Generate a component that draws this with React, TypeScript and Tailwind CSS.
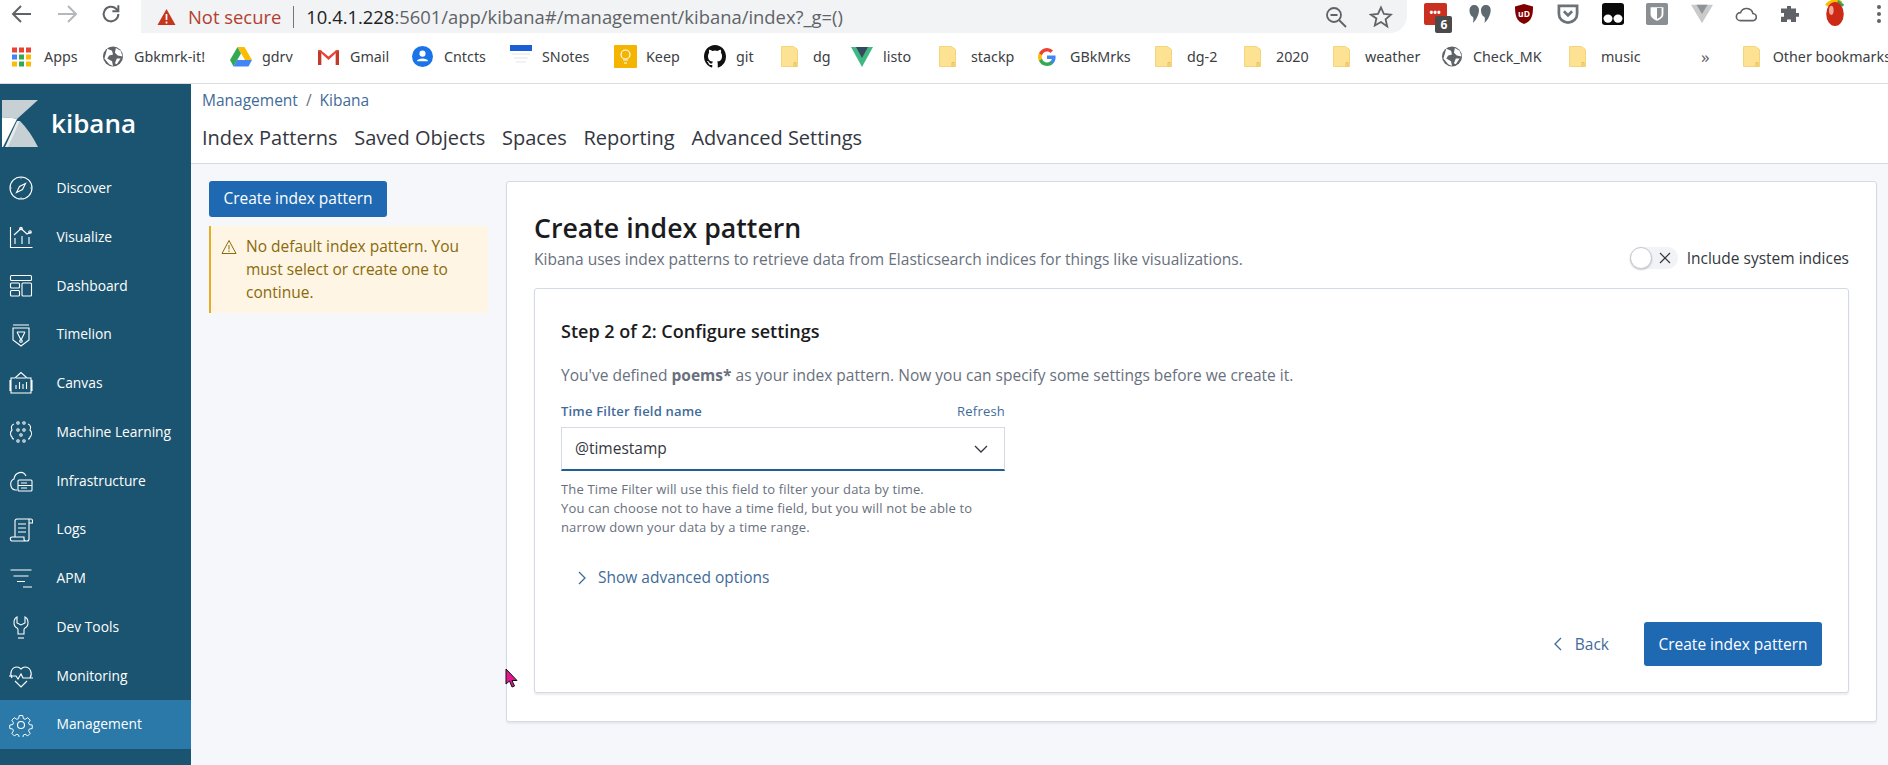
import React from "react";

const S = ({ children, size = 24, vb = "0 0 24 24", className = "", sw = 1.1 }: any) => (
  <svg width={size} height={size} viewBox={vb} fill="none" stroke="currentColor" strokeWidth={sw} className={className}>
    {children}
  </svg>
);

const navIcons: Record<string, React.ReactNode> = {
  Discover: <S><circle cx="12" cy="12" r="11" /><path d="M16.500 7.500l-3 6-6 3 3-6z" /><path d="M12 1v2M12 21v2M1 12h2M21 12h2" strokeWidth=".6" /></S>,
  Visualize: <S><path d="M1.500 2v20.500h22" /><path d="M5 10l7-6.500 6 5.500 4-2" /><circle cx="12" cy="3.500" r="1.300" /><circle cx="21" cy="7" r="1.300" /><path d="M6 13v6M13 11v8M20 12v7" /></S>,
  Dashboard: <S><rect x="1.500" y="1.500" width="21" height="5" rx="1" /><rect x="1.500" y="9" width="9" height="5" rx="1" /><rect x="1.500" y="16.500" width="9" height="5.500" rx="1" /><rect x="13" y="9" width="9.500" height="13" rx="1" /></S>,
  Timelion: <S><path d="M4 2h16M4 5h16v12l-8 6-8-6z" /><path d="M8 9h8M8 9l4 8 4-8" /><circle cx="12" cy="18" r="1.300" /></S>,
  Canvas: <S><path d="M12 1.500L6 7H2v15h20V7h-4zM1 9v11M23 9v11" /><path d="M7 18v-4M10.500 18v-7M14 18v-5M17.500 18v-7M7 7h10" /></S>,
  "Machine Learning": <S><circle cx="9" cy="3" r="1.200" /><circle cx="15" cy="3" r="1.200" /><circle cx="9" cy="10" r="1.200" /><circle cx="15" cy="10" r="1.200" /><circle cx="12" cy="15" r="1.200" /><circle cx="9" cy="21" r="1.200" /><circle cx="15" cy="21" r="1.200" /><path d="M5 4C2 5 2 8 3 10c-2 2-2 5 0 7 0 1 1 2 2 2M19 4c3 1 3 4 2 6 2 2 2 5 0 7 0 1-1 2-2 2" /></S>,
  Infrastructure: <S><path d="M8 21H6C1 20 0 12 5 10 6 3 14 1 17 7" /><rect x="9" y="11" width="14" height="11" rx="1" /><path d="M9 16.500h14M12 14h6M12 19h6" /></S>,
  Logs: <S><path d="M6 19V3a2 2 0 012-2h14c1 0 1.500 1 1.500 2v2H20M20 1v20a2 2 0 01-2 2H3c-2 0-2.500-4 0-4h12v2a2 2 0 002 2" /><path d="M9 6h8M9 10h8M9 14h8" /></S>,
  APM: <S><path d="M1.500 4h21M4.500 10h15M8 15.500h8M14 21h9" /></S>,
  "Dev Tools": <S><path d="M8 2C4 4 4 11 8 13c1 .6 1 1 1 2v4h6v-4c0-1 0-1.400 1-2 4-2 4-9 0-11v6l-4 2-4-2z" /><path d="M9 23h6" /></S>,
  Monitoring: <S><path d="M3 14C0 9 3 3 8 3c2 0 3 1 4 2 1-1 2-2 4-2 5 0 8 6 5 11" /><path d="M0 12h7l2 3 3-5 2 4h10" /><path d="M6 17l6 6 6-6" /></S>,
  Management: <S><circle cx="12" cy="12" r="3.500" /><path d="M10 1.500h4l.6 3.300 2 .9 2.900-1.800 2.700 2.800-1.800 2.800.8 2 3.300.6v3.800l-3.300.6-.8 2 1.800 2.800-2.700 2.800-2.900-1.800-2 .9-.6 3.300h-4l-.6-3.300-2-.9-2.900 1.800-2.700-2.800 1.800-2.800-.8-2-3.300-.6v-3.800l3.300-.6.800-2-1.800-2.800 2.700-2.800 2.900 1.800 2-.9z" transform="translate(1.200 1.200) scale(.9)" /></S>,
};

const navItems = Object.keys(navIcons);

const Folder = () => (
  <svg width="17" height="21" viewBox="0 0 17 21">
    <path d="M.5.500h12l4 3v17H.5z" fill="#fde293" stroke="#f5d47a" strokeWidth="1" />
    <path d="M13 20.500v-4h2v4" fill="none" stroke="#e8bf55" strokeWidth="1" />
  </svg>
);
const Globe = () => (
  <svg width="22" height="21" viewBox="0 0 22 22">
    <circle cx="11" cy="11" r="10.500" fill="#5f6368" />
    <path d="M5 3l5 2 1 4-4 1-2 3 5 3 1 5-4-2-5-6zM14 2l5 3 2 6-5-1-3-3zM15 13l4 0-4 6-2-1z" fill="#fff" />
  </svg>
);

const bookmarks: { icon: React.ReactNode; label: string; w: string }[] = [
  { w: "w-[90px]", icon: <svg width="19" height="20" viewBox="0 0 19 19">{[["#ea4335","#ea4335","#ea4335"],["#4285f4","#34a853","#fbbc04"],["#fbbc04","#34a853","#fbbc04"]].map((r,y)=>r.map((c,x)=><rect key={`${x}${y}`} x={x*7} y={y*7} width="5" height="5" fill={c}/>))}</svg>, label: "Apps" },
  { w: "w-[128px]", icon: <Globe />, label: "Gbkmrk-it!" },
  { w: "w-[88px]", icon: <svg width="22" height="20" viewBox="0 0 22 20"><path d="M7.500 0h7l7.500 13h-7z" fill="#fbbc04"/><path d="M7.500 0L0 13l3.500 6.500L11 6.500z" fill="#34a853"/><path d="M3.500 19.500h15L22 13H7z" fill="#4285f4"/></svg>, label: "gdrv" },
  { w: "w-[94px]", icon: <svg width="21" height="16" viewBox="0 0 22 19" preserveAspectRatio="none"><path d="M0 1.500h3.500V19H0zM18.500 1.500H22V19h-3.500z" fill="#c5392a"/><path d="M0 1.500h3L11 9l8-7.500h3L11 13z" fill="#ea4335"/></svg>, label: "Gmail" },
  { w: "w-[98px]", icon: <svg width="21" height="21" viewBox="0 0 22 22"><circle cx="11" cy="11" r="11" fill="#1a73e8"/><circle cx="11" cy="8" r="3.200" fill="#fff"/><path d="M5 16c1-4 11-4 12 0z" fill="#fff"/></svg>, label: "Cntcts" },
  { w: "w-[104px]", icon: <svg width="22" height="20" viewBox="0 0 22 20" className="-mt-[4px]"><rect width="22" height="6" fill="#1a5fd6"/><path d="M2 9h18M4 13h14M6 17h10" stroke="#eee" strokeWidth="1.500"/></svg>, label: "SNotes" },
  { w: "w-[90px]", icon: <svg width="23" height="23" viewBox="0 0 23 23"><rect width="23" height="23" rx="1" fill="#f4b400"/><circle cx="11.500" cy="9.500" r="4.500" fill="none" stroke="#fff" strokeWidth="1.200"/><path d="M9 15h5M10 18h3" stroke="#fff" strokeWidth="1.200"/></svg>, label: "Keep" },
  { w: "w-[77px]", icon: <svg width="22" height="23" viewBox="0 0 16 16" preserveAspectRatio="none"><path fill="#111" d="M8 0C3.580 0 0 3.580 0 8c0 3.540 2.290 6.530 5.470 7.590.4.070.55-.17.550-.38v-1.340c-2.230.48-2.700-1.070-2.700-1.070-.36-.93-.89-1.170-.89-1.170-.73-.5.050-.49.050-.49.800.06 1.230.82 1.230.82.710 1.230 1.870.87 2.330.66.070-.52.280-.87.510-1.070-1.780-.2-3.640-.89-3.640-3.950 0-.87.310-1.590.820-2.150-.08-.2-.36-1.020.080-2.120 0 0 .67-.21 2.200.82a7.600 7.600 0 014 0c1.530-1.040 2.200-.82 2.200-.82.440 1.100.16 1.920.08 2.120.51.560.82 1.270.82 2.150 0 3.070-1.870 3.750-3.650 3.950.29.250.54.730.54 1.480v2.200c0 .21.150.46.550.38A8.010 8.010 0 0016 8c0-4.420-3.580-8-8-8z"/></svg>, label: "git" },
  { w: "w-[70px]", icon: <Folder />, label: "dg" },
  { w: "w-[88px]", icon: <svg width="22" height="20" viewBox="0 0 22 20"><path d="M0 0h22L11 20z" fill="#41b883"/><path d="M5 0h12l-6 11z" fill="#35495e"/></svg>, label: "listo" },
  { w: "w-[99px]", icon: <Folder />, label: "stackp" },
  { w: "w-[117px]", icon: <svg width="18" height="18" viewBox="0 0 18 18"><path d="M17.600 9.200c0-.6-.1-1.200-.2-1.800H9v3.500h4.800a4 4 0 01-1.800 2.700v2.200h2.900c1.700-1.600 2.700-3.900 2.700-6.600z" fill="#4285f4"/><path d="M9 18c2.400 0 4.500-.8 5.900-2.200L12 13.600c-.8.500-1.800.9-3 .9-2.300 0-4.300-1.600-5-3.700H1v2.300A9 9 0 009 18z" fill="#34a853"/><path d="M4 10.700a5.400 5.400 0 010-3.400V5H1a9 9 0 000 8z" fill="#fbbc05"/><path d="M9 3.600c1.300 0 2.500.5 3.400 1.300L15 2.400A9 9 0 001 5l3 2.300c.7-2.100 2.700-3.700 5-3.700z" fill="#ea4335"/></svg>, label: "GBkMrks" },
  { w: "w-[89px]", icon: <Folder />, label: "dg-2" },
  { w: "w-[89px]", icon: <Folder />, label: "2020" },
  { w: "w-[108px]", icon: <Folder />, label: "weather" },
  { w: "w-[128px]", icon: <Globe />, label: "Check_MK" },
  { w: "w-[132px]", icon: <Folder />, label: "music" },
];

const Ext = ({ children }: any) => <div className="relative flex h-[28px] w-[44.400px] items-center justify-center">{children}</div>;

export default function App() {
  return (
    <div className="relative flex h-[765px] w-[1888px] flex-col overflow-hidden bg-white font-['Open_Sans','Noto_Sans',sans-serif] text-[#343741]">
      {/* Browser toolbar */}
      <div className="flex h-[34px] shrink-0 items-start">
        <div className="flex h-[28px] w-[141px] shrink-0 items-center pl-[11px] text-[#5f6368]">
          <svg width="22" height="20" viewBox="0 0 22 20" fill="none" stroke="currentColor" strokeWidth="2"><path d="M20 10H2M10 2l-8 8 8 8" /></svg>
          <svg width="22" height="20" viewBox="0 0 22 20" fill="none" stroke="#b4b7bb" strokeWidth="2" className="ml-[23px]"><path d="M2 10h18M12 2l8 8-8 8" /></svg>
          <svg width="22" height="22" viewBox="0 0 24 24" fill="none" stroke="currentColor" strokeWidth="2.200" className="ml-[22px]"><path d="M20 12a8 8 0 11-2.400-5.700L20 9" /><path d="M20 2.500V9h-6.500" /></svg>
        </div>
        <div className="flex h-[33px] w-[1266px] shrink-0 items-center rounded-br-[17px] bg-[#f1f3f4] pl-[16px] pr-[14px] text-[18.400px]">
          <svg width="19" height="18" viewBox="0 0 19 18"><path d="M9.500 1L18.500 17H.5z" fill="#c5361d" /><path d="M9.500 6v6M9.500 13.500v2" stroke="#fff" strokeWidth="1.700" /></svg>
          <span className="ml-[12px] text-[#b3402f]">Not secure</span>
          <span className="mx-[12px] h-[22px] w-px bg-[#70757a]" />
          <span className="text-[#202124]">10.4.1.228</span>
          <span className="text-[#5f6368]">:5601/app/kibana#/management/kibana/index?_g=()</span>
          <svg width="24" height="24" viewBox="0 0 24 24" fill="none" stroke="#5f6368" strokeWidth="1.800" className="ml-auto mr-[21px]"><circle cx="10" cy="10" r="7" /><path d="M6.500 10h7M15 15l7 7" /></svg>
          <svg width="24" height="24" viewBox="0 0 24 24" fill="none" stroke="#5f6368" strokeWidth="1.800"><path d="M12 2.500l2.900 6.500 7 .7-5.300 4.700 1.600 7L12 17l-6.200 3.500 1.600-7L2 9.700 9 9z" /></svg>
        </div>
        <div className="ml-[6px] flex h-[28px] items-center">
          <Ext>
            <div className="flex h-[22px] w-[23px] items-center justify-center rounded-[2px] bg-[#c9301f] pb-[4px] text-[10px] font-bold leading-none text-white">•••</div>
            <span className="absolute bottom-[-5px] right-[5px] flex h-[17px] w-[17px] items-center justify-center rounded-[2px] bg-[#4a4a4a] text-[12px] font-bold text-white">6</span>
          </Ext>
          <Ext><svg width="22" height="20" viewBox="0 0 22 20" fill="#5f6a70"><path d="M5.500 1C8 1 10 3 10 6c0 5-3 10-6 13 .500-3 .500-5 0-6C1.500 12 .5 9 .5 6.500.5 3 2.500 1 5.500 1zM17 1c2.700 0 4.700 2 4.700 5 0 5-3 10-6.200 13 .500-3 .500-5 0-6C13 12 12 9 12 6.500 12 3 14 1 17 1z" /></svg></Ext>
          <Ext><svg width="20" height="20" viewBox="0 0 20 20"><path d="M10 0l9 2.500C19 11 18 17 10 20 2 17 1 11 1 2.500z" fill="#800000" /><text x="10" y="13" textAnchor="middle" fontSize="8.500" fill="#fff" fontWeight="700">uD</text></svg></Ext>
          <Ext><svg width="22" height="20" viewBox="0 0 24 22" fill="none" stroke="#6c7378" strokeWidth="3"><path d="M2 2h20v9a10 9.500 0 01-20 0z" /><path d="M7.500 8l4.500 4.500L16.500 8" /></svg></Ext>
          <Ext><svg width="22" height="22" viewBox="0 0 22 24" preserveAspectRatio="none"><rect width="22" height="24" rx="3" fill="#0a0a0a" /><circle cx="6" cy="17" r="4.500" fill="#fff" /><circle cx="16" cy="17" r="4.500" fill="#fff" /></svg></Ext>
          <Ext><svg width="22" height="22" viewBox="0 0 24 26" preserveAspectRatio="none"><rect width="24" height="26" rx="2" fill="#8a8f93" /><path d="M5 5h14v8c0 4-3 6-7 8-4-2-7-4-7-8z" fill="#fff" /><path d="M12 6h5v7c0 3-2 4.500-5 6z" fill="#8a8f93" /></svg></Ext>
          <Ext><svg width="22" height="20" viewBox="0 0 24 24" preserveAspectRatio="none"><path d="M0 1h24L12 23z" fill="#c8cacc" /><path d="M6 1h12l-6 11z" fill="#909396" /></svg></Ext>
          <Ext><svg width="22" height="16" viewBox="0 0 24 18" preserveAspectRatio="none" fill="none" stroke="#5f6368" strokeWidth="1.800"><path d="M6 16.500h13a4 4 0 00.500-8A7 7 0 006 7.500a4.500 4.500 0 000 9z" /></svg></Ext>
          <Ext><svg width="20" height="18" viewBox="0 0 20 20" preserveAspectRatio="none" fill="#5f6368"><path d="M7 1h4v3h5v5h3v4h-3v6H11v-3H7v3H1v-6h3v-4H1V4h6z" /></svg></Ext>
          <Ext><svg width="24" height="28" viewBox="0 0 26 30"><path d="M4 6c3-5 10-6 16-3" fill="none" stroke="#fbbc04" strokeWidth="4" /><path d="M16 1l6 5" stroke="#34a853" strokeWidth="3" /><ellipse cx="13" cy="15" rx="9.500" ry="13" fill="#cc2a16" /><ellipse cx="9" cy="11" rx="2.500" ry="5" fill="#f2a797" /></svg></Ext>
          <Ext><svg width="4" height="18" viewBox="0 0 4 18" fill="#5f6368"><circle cx="2" cy="2" r="2" /><circle cx="2" cy="9" r="2" /><circle cx="2" cy="16" r="2" /></svg></Ext>
        </div>
      </div>

      {/* Bookmarks bar */}
      <div className="flex h-[50px] shrink-0 items-center border-b border-[#dadce0] pb-[4px] pl-[12px] font-['Noto_Sans',sans-serif] text-[14.300px] text-[#3c4043]">
        {bookmarks.map((b) => (
          <div key={b.label} className={`flex shrink-0 items-center whitespace-nowrap ${b.w}`}>
            <span className="flex w-[32px] shrink-0 items-center">{b.icon}</span>
            <span>{b.label}</span>
          </div>
        ))}
        <span className="text-[17px] text-[#5f6368]">»</span>
        <span className="ml-[16px] h-[24px] w-px bg-[#c8cacc]" />
        <div className="ml-[17px] flex shrink-0 items-center whitespace-nowrap">
          <span className="flex w-[30px] shrink-0"><Folder /></span>
          <span>Other bookmarks</span>
        </div>
      </div>

      <div className="flex min-h-0 flex-1">
        {/* Sidebar */}
        <aside className="flex w-[191px] shrink-0 flex-col bg-[#1b5470] text-white">
          <div className="flex h-[80px] shrink-0 items-center pl-[2px]">
            <svg width="36" height="47" viewBox="0 0 36 47" className="mt-[-1px]">
              <path d="M0 0h36L15 19Q8 17 0 18z" fill="#c6d0d5" />
              <path d="M0 18q8-1 15 1L1 47H0z" fill="#fff" />
              <path d="M18 21q10 10 18 26H4z" fill="#c6d0d5" />
              <path d="M15 21l3 0L6 47H3z" fill="#e8ecee" />
            </svg>
            <span className="mb-[2px] ml-[13px] text-[26px] font-semibold leading-none">kibana</span>
          </div>
          {navItems.map((n) => (
            <div key={n} className={`flex h-[48.750px] shrink-0 items-center pl-[9px] ${n === "Management" ? "bg-[#2a79a8]" : ""}`}>
              {navIcons[n]}
              <span className="ml-[23.500px] whitespace-nowrap text-[13.800px] font-medium">{n}</span>
            </div>
          ))}
        </aside>

        {/* Main */}
        <main className="flex min-w-0 flex-1 flex-col bg-[#f5f7fa]">
          <header className="flex h-[80px] shrink-0 flex-col border-b border-[#d3dae6] bg-white pl-[11px]">
            <div className="mt-[5px] flex items-center gap-[8px] text-[15.500px] text-[#3f6b99]">
              <span>Management</span>
              <span className="text-[#69707d]">/</span>
              <span>Kibana</span>
            </div>
            <div className="mt-[11px] flex gap-[16.700px] text-[20px] text-[#343741]">
              <span>Index Patterns</span>
              <span>Saved Objects</span>
              <span>Spaces</span>
              <span>Reporting</span>
              <span>Advanced Settings</span>
            </div>
          </header>

          <div className="flex flex-1 items-start pl-[18px] pt-[17px]">
            <div className="w-[280px] shrink-0">
              <button className="flex h-[36px] w-[178px] items-center justify-center rounded-[3px] bg-[#1f69b3] text-[15.500px] text-white">Create index pattern</button>
              <div className="mt-[9px] flex w-[279px] items-start border-l-2 border-[#e6ac25] bg-[#fef5e5] py-[9px] pl-[10px] pr-[16px] text-[15.500px] leading-[23px] text-[#8a6a0a]">
                <svg width="16" height="16" viewBox="0 0 16 16" fill="none" stroke="#8a6a0a" strokeWidth="1" className="mt-[4px] shrink-0"><path d="M8 1.500L15 14.500H1zM8 6v4.500M8 11.500v1.500" /></svg>
                <p className="ml-[9px]">No default index pattern. You must select or create one to continue.</p>
              </div>
            </div>

            <section className="ml-[17px] h-[541px] w-[1371px] shrink-0 rounded-[3px] border border-[#d3dae6] bg-white pl-[27px] pr-[27px] pt-[28px] shadow-[0_2px_2px_rgba(0,0,0,0.06)]">
              <div className="flex items-end justify-between">
                <div>
                  <h1 className="text-[26.700px] font-semibold leading-[36px] text-[#1a1c21]">Create index pattern</h1>
                  <p className="mt-[2px] text-[15.530px] leading-[22px] text-[#69707d]">Kibana uses index patterns to retrieve data from Elasticsearch indices for things like visualizations.</p>
                </div>
                <div className="flex items-center text-[15.500px]">
                  <span className="relative flex h-[22px] w-[48px] items-center justify-end rounded-full bg-[#f1f3f6] pr-[6px] text-[#343741]">
                    <span className="absolute left-0 top-0 h-[22px] w-[22px] rounded-full border border-[#c5cad1] bg-white shadow-[0_1px_2px_rgba(0,0,0,0.2)]" />
                    <svg width="14" height="14" viewBox="0 0 14 14" fill="none" stroke="currentColor" strokeWidth="1.200"><path d="M2 2l10 10M12 2L2 12" /></svg>
                  </span>
                  <span className="ml-[9px]">Include system indices</span>
                </div>
              </div>

              <div className="mt-[18px] h-[405px] rounded-[3px] border border-[#d3dae6] bg-white pl-[26px] pr-[26px] pt-[29px] shadow-[0_2px_2px_rgba(0,0,0,0.08)]">
                <h2 className="text-[18px] font-semibold leading-[26px] text-[#1a1c21]">Step 2 of 2: Configure settings</h2>
                <p className="mt-[20px] text-[15.530px] leading-[22px] text-[#69707d]">You've defined <strong className="font-bold">poems*</strong> as your index pattern. Now you can specify some settings before we create it.</p>
                <div className="mt-[17px] w-[444px]">
                  <div className="flex h-[16px] items-center justify-between text-[13px] leading-none tracking-[.2px]">
                    <span className="font-semibold text-[#3f6b99]">Time Filter field name</span>
                    <span className="text-[#3f6b99]">Refresh</span>
                  </div>
                  <div className="mt-[8px] flex h-[44px] items-center justify-between border border-b-2 border-[#d3dae6] border-b-[#1f5f94] pl-[13px] pr-[15px] text-[15.500px] text-[#343741]">
                    <span>@timestamp</span>
                    <svg width="16" height="16" viewBox="0 0 16 16" fill="none" stroke="currentColor" strokeWidth="1.300"><path d="M2 5l6 6 6-6" /></svg>
                  </div>
                  <p className="mt-[9px] text-[13px] leading-[19px] tracking-[.15px] text-[#69707d]">The Time Filter will use this field to filter your data by time.<br />You can choose not to have a time field, but you will not be able to narrow down your data by a time range.</p>
                </div>
                <div className="ml-[15px] mt-[29px] flex items-center text-[15.500px] text-[#3f6b99]">
                  <svg width="12" height="16" viewBox="0 0 12 16" fill="none" stroke="currentColor" strokeWidth="1.300"><path d="M3 2l6 6-6 6" /></svg>
                  <span className="ml-[10px]">Show advanced options</span>
                </div>
                <div className="mt-[33px] flex items-center justify-end">
                  <div className="mr-[35px] flex items-center text-[15.500px] text-[#3f6b99]">
                    <svg width="12" height="16" viewBox="0 0 12 16" fill="none" stroke="currentColor" strokeWidth="1.300"><path d="M9 2L3 8l6 6" /></svg>
                    <span className="ml-[11px]">Back</span>
                  </div>
                  <button className="flex h-[44px] w-[178px] items-center justify-center rounded-[3px] bg-[#1f69b3] text-[15.500px] text-white">Create index pattern</button>
                </div>
              </div>
            </section>
          </div>
        </main>
      </div>

      {/* Mouse pointer caught in the screenshot */}
      <svg width="13" height="20" viewBox="0 0 13 20" className="absolute left-[505px] top-[668px]">
        <path d="M1 1v15l3.500-3 2.500 6 2.500-1-2.500-5.500H12z" fill="#e0188f" stroke="#111" strokeWidth="1" />
      </svg>
    </div>
  );
}
